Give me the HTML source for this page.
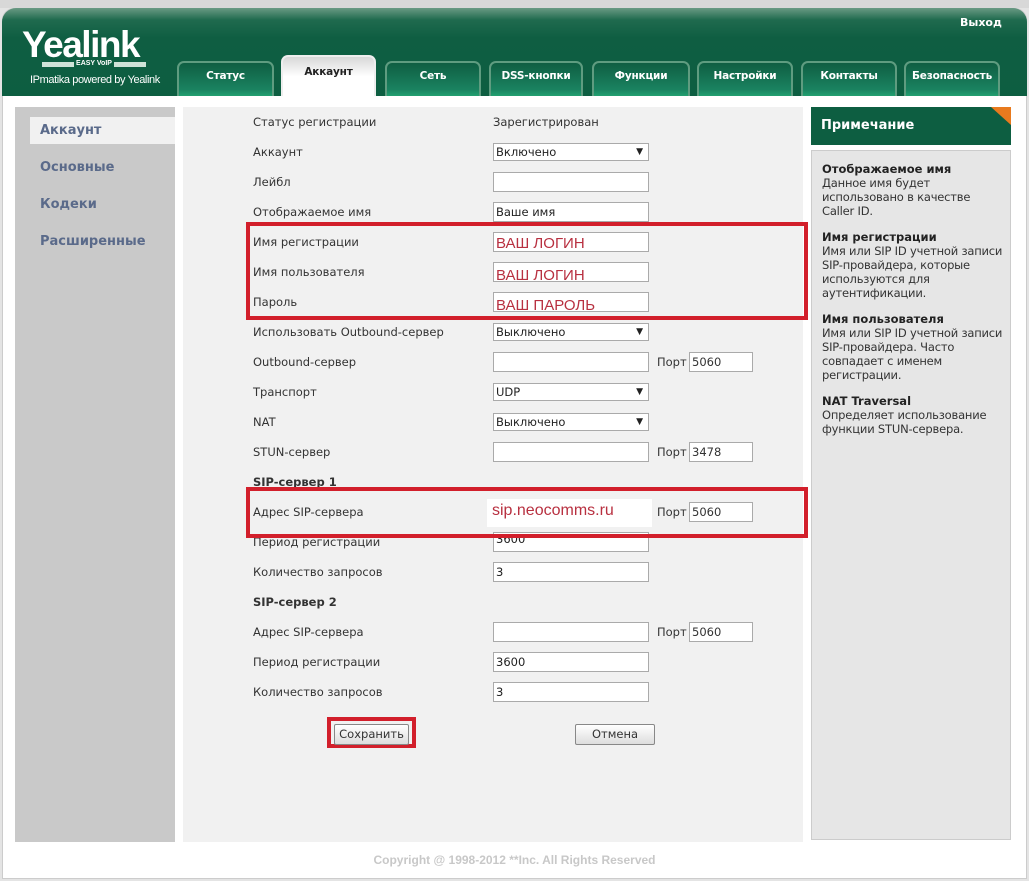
<!DOCTYPE html>
<html><head><meta charset="utf-8"><style>
*{margin:0;padding:0;box-sizing:border-box}
body{width:1029px;height:881px;background:#e4e4e4;font-family:"DejaVu Sans","Liberation Sans",sans-serif;position:relative;overflow:hidden;font-size:12px;color:#333}
.a{position:absolute}
#frame{left:2px;top:8px;width:1025px;height:871px;background:#fff;border-radius:12px 12px 0 0;border:1px solid #ccc}
#hdr{left:2px;top:8px;width:1025px;height:88px;border-radius:14px 14px 0 0;background:linear-gradient(#6a9a84 0,#1f6a4e 12px,#0f5e42 30px,#0d5e41 100%)}
.logo{left:22px;top:24px;font:bold 37px "Liberation Sans",sans-serif;color:#fff;letter-spacing:-1.5px}
.tab{top:61px;height:35px;border:2px solid #5f9c80;border-bottom:none;border-radius:7px 7px 0 0;background:linear-gradient(#0f5e42,#1a8260 80%,#22a070);color:#fff;font:bold 10.5px "DejaVu Sans",sans-serif;text-align:center;line-height:27px;letter-spacing:-0.2px}
.tab.on{top:55px;height:41px;background:linear-gradient(#d8d8d8,#fff 50%);border-color:#eee;color:#222;line-height:30px}
.lbl{left:253px;font-size:11.5px;color:#333}
.inp{left:493px;width:156px;height:20px;background:#fff;border:1px solid #aaa;font-size:11.5px;padding:2px 2px;color:#222;line-height:14px}
.sel:after{content:"▼";position:absolute;right:5px;top:2px;font-size:9px}
.port{left:657px;font-size:11.5px}
.pin{left:689px;width:64px;height:20px;background:#fff;border:1px solid #aaa;padding:2px;font-size:11.5px;line-height:14px}
.red{border:4px solid #d21f2b}
.rv{color:#b83040;font:15px "Liberation Sans",sans-serif}
.note b{display:block;color:#222;font-size:11.5px}
.note p{font-size:11.5px;color:#333;line-height:14px;margin-bottom:12px;letter-spacing:-0.2px}
.btn{height:21px;border:1px solid #888;background:linear-gradient(#fff,#ddd);font-size:11.5px;text-align:center;line-height:19px;border-radius:2px}
</style></head><body>
<div class="a" style="left:0;top:0;width:1029px;height:8px;background:#d8d8d8"></div>
<div class="a" id="frame"></div>
<div class="a" id="hdr"></div>
<div class="a logo">Yealink</div>
<div class="a" style="left:42px;top:62px;width:104px;height:5px;background:#cfe3d8"></div>
<div class="a" style="left:74px;top:59px;width:40px;height:10px;background:#0d5e41;color:#fff;font:bold 7px sans-serif;text-align:center;line-height:10px">EASY VoIP</div>
<div class="a" style="left:30px;top:74px;color:#fff;font:11px 'Liberation Sans',sans-serif;letter-spacing:-0.4px">IPmatika powered by Yealink</div>
<div class="a" style="left:960px;top:16px;color:#fff;font:bold 11px 'DejaVu Sans',sans-serif">Выход</div>
<div class="a tab" style="left:177px;width:97px">Статус</div>
<div class="a tab on" style="left:281px;width:95px">Аккаунт</div>
<div class="a tab" style="left:385px;width:96px">Сеть</div>
<div class="a tab" style="left:489px;width:94px">DSS-кнопки</div>
<div class="a tab" style="left:592px;width:98px">Функции</div>
<div class="a tab" style="left:697px;width:96px">Настройки</div>
<div class="a tab" style="left:801px;width:96px">Контакты</div>
<div class="a tab" style="left:904px;width:96px">Безопасность</div>

<div class="a" style="left:15px;top:107px;width:160px;height:735px;background:#c9c9c9"></div>
<div class="a" style="left:30px;top:117px;width:145px;height:27px;background:#f1f1f1"></div>
<div class="a" style="left:40px;top:123px;font:bold 13px 'DejaVu Sans',sans-serif;color:#5a6a8a">Аккаунт</div>
<div class="a" style="left:40px;top:160px;font:bold 13px 'DejaVu Sans',sans-serif;color:#5a6a8a">Основные</div>
<div class="a" style="left:40px;top:197px;font:bold 13px 'DejaVu Sans',sans-serif;color:#5a6a8a">Кодеки</div>
<div class="a" style="left:40px;top:234px;font:bold 13px 'DejaVu Sans',sans-serif;color:#5a6a8a">Расширенные</div>

<div class="a" style="left:183px;top:107px;width:620px;height:735px;background:#f1f1f1"></div>

<div class="a" style="left:811px;top:107px;width:200px;height:38px;background:#0d5e41"></div>
<div class="a" style="left:991px;top:107px;width:0;height:0;border-left:20px solid transparent;border-top:18px solid #e87a1e"></div>
<div class="a" style="left:821px;top:118px;color:#fff;font:bold 13px 'DejaVu Sans',sans-serif">Примечание</div>
<div class="a note" style="left:811px;top:150px;width:200px;height:690px;background:#e6e6e6;border:1px solid #ccc;padding:11px 6px 11px 10px">
<b>Отображаемое имя</b><p>Данное имя будет использовано в качестве Caller ID.</p>
<b>Имя регистрации</b><p>Имя или SIP ID учетной записи SIP-провайдера, которые используются для аутентификации.</p>
<b>Имя пользователя</b><p>Имя или SIP ID учетной записи SIP-провайдера. Часто совпадает с именем регистрации.</p>
<b>NAT Traversal</b><p>Определяет использование функции STUN-сервера.</p>
</div>

<div class="a lbl" style="top:115px">Статус регистрации</div><div class="a" style="left:493px;top:115px;font-size:11.5px">Зарегистрирован</div>
<div class="a lbl" style="top:145px">Аккаунт</div><div class="a inp sel" style="top:143px;height:18px;line-height:13px">Включено</div>
<div class="a lbl" style="top:175px">Лейбл</div><div class="a inp" style="top:172px"></div>
<div class="a lbl" style="top:205px">Отображаемое имя</div><div class="a inp" style="top:202px">Ваше имя</div>
<div class="a lbl" style="top:235px">Имя регистрации</div><div class="a inp rv" style="top:232px">ВАШ ЛОГИН</div>
<div class="a lbl" style="top:265px">Имя пользователя</div><div class="a inp rv" style="top:262px;padding-top:4px">ВАШ ЛОГИН</div>
<div class="a lbl" style="top:295px">Пароль</div><div class="a inp rv" style="top:292px;padding-top:4px">ВАШ ПАРОЛЬ</div>
<div class="a lbl" style="top:325px">Использовать Outbound-сервер</div><div class="a inp sel" style="top:323px;height:18px;line-height:13px">Выключено</div>
<div class="a lbl" style="top:355px">Outbound-сервер</div><div class="a inp" style="top:352px"></div><div class="a port" style="top:355px">Порт</div><div class="a pin" style="top:352px">5060</div>
<div class="a lbl" style="top:385px">Транспорт</div><div class="a inp sel" style="top:383px;height:18px;line-height:13px">UDP</div>
<div class="a lbl" style="top:415px">NAT</div><div class="a inp sel" style="top:413px;height:18px;line-height:13px">Выключено</div>
<div class="a lbl" style="top:445px">STUN-сервер</div><div class="a inp" style="top:442px"></div><div class="a port" style="top:445px">Порт</div><div class="a pin" style="top:442px">3478</div>
<div class="a lbl" style="top:475px;font-weight:bold">SIP-сервер 1</div>
<div class="a lbl" style="top:505px">Адрес SIP-сервера</div><div class="a" style="left:487px;top:499px;width:165px;height:28px;background:#fff"></div><div class="a rv" style="left:492px;top:502px;font-size:16px">sip.neocomms.ru</div><div class="a port" style="top:505px">Порт</div><div class="a pin" style="top:502px">5060</div>
<div class="a lbl" style="top:535px">Период регистрации</div><div class="a inp" style="top:532px;line-height:8px">3600</div>
<div class="a lbl" style="top:565px">Количество запросов</div><div class="a inp" style="top:562px">3</div>
<div class="a lbl" style="top:595px;font-weight:bold">SIP-сервер 2</div>
<div class="a lbl" style="top:625px">Адрес SIP-сервера</div><div class="a inp" style="top:622px"></div><div class="a port" style="top:625px">Порт</div><div class="a pin" style="top:622px">5060</div>
<div class="a lbl" style="top:655px">Период регистрации</div><div class="a inp" style="top:652px">3600</div>
<div class="a lbl" style="top:685px">Количество запросов</div><div class="a inp" style="top:682px">3</div>

<div class="a red" style="left:246px;top:222px;width:562px;height:98px"></div>
<div class="a red" style="left:246px;top:487px;width:562px;height:51px"></div>
<div class="a red" style="left:327px;top:717px;width:89px;height:31px"></div>
<div class="a btn" style="left:334px;top:724px;width:75px">Сохранить</div>
<div class="a btn" style="left:575px;top:724px;width:80px">Отмена</div>

<div class="a" style="left:0;top:853px;width:1029px;text-align:center;color:#c8c8c8;font:bold 12px 'Liberation Sans',sans-serif">Copyright @ 1998-2012 **Inc. All Rights Reserved</div>
</body></html>
